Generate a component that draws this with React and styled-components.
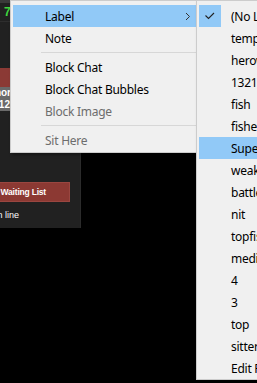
import React from "react";
import styled, { createGlobalStyle } from "styled-components";

const Global = createGlobalStyle`
  html, body { margin: 0; padding: 0; background: #000; }
  body { overflow: hidden; }
`;

const Stage = styled.div`
  position: relative;
  width: 257px;
  height: 383px;
  overflow: hidden;
  background: #000;
  font-family: "Noto Sans", "DejaVu Sans", sans-serif;
`;

const Panel = styled.div`
  width: 80px;
  height: 228px;
  background: #212121;
  border-right: 1px solid #2b2b2b;
  display: flex;
  flex-direction: column;
  overflow: hidden;
  font-family: "Liberation Sans", "DejaVu Sans", sans-serif;
`;

const TopStrip = styled.div`
  height: 3px;
  background: #3a3a3a;
`;

const SeatRow = styled.div`
  height: 18px;
  border-bottom: 1px solid #2e2e2e;
  display: flex;
  align-items: center;
  padding-left: 4px;
  color: #3fd63f;
  font-weight: bold;
  font-size: 12px;
`;

const Spacer = styled.div`
  height: ${(p) => p.$h}px;
  flex: none;
`;

const RedBar = styled.div`
  height: 19px;
  background: #8b3a35;
`;

const GreyBar = styled.div`
  height: 25px;
  background: #6a6a6a;
  color: #fff;
  font-weight: bold;
  font-size: 10px;
  line-height: 12px;
  display: flex;
  flex-direction: column;
  justify-content: center;
`;

/* a text fragment whose start is hidden past the panel's left edge:
   it ends at a given x and overflows to the left, where the panel clips it */
const EndAt = styled.div`
  flex: none;
  width: ${(p) => p.$end}px;
  display: flex;
  justify-content: flex-end;
  white-space: nowrap;
`;

const WaitButton = styled.div`
  width: 70px;
  height: 20px;
  box-sizing: border-box;
  background: #8c3933;
  border: 1px solid #9a4640;
  border-left: none;
  color: #fff;
  font-weight: bold;
  font-size: 8.5px;
  letter-spacing: -0.2px;
  display: flex;
  align-items: center;
`;

const LineText = styled.div`
  color: #fff;
  font-size: 9px;
  height: 26px;
  display: flex;
  align-items: center;
`;

const Menu = styled.div`
  position: absolute;
  top: ${(p) => p.$top}px;
  left: ${(p) => p.$left}px;
  width: ${(p) => p.$width}px;
  box-sizing: border-box;
  background: #f0f0f0;
  border: 1px solid #cccccc;
  padding: 4px 2px ${(p) => p.$pb}px 2px;
  box-shadow: 2px 2px 3px rgba(0, 0, 0, 0.35);
  font-family: "Noto Sans", "Open Sans", sans-serif;
  font-size: 12px;
  letter-spacing: -0.25px;
`;

const Item = styled.div`
  position: relative;
  height: 22px;
  display: flex;
  align-items: center;
  padding-left: 32px;
  background: ${(p) => (p.$hl ? "#91c9f7" : "transparent")};
  color: ${(p) => (p.$disabled ? "#6d6d6d" : "#000")};
  white-space: nowrap;
`;

const Separator = styled.div`
  height: 1px;
  background: #d7d7d7;
  margin: 3px 0 3px 28px;
`;

const Chevron = styled.svg`
  position: absolute;
  left: 172px;
  top: 7px;
`;

const CheckBox = styled.div`
  position: absolute;
  left: 0;
  top: 0;
  width: 22px;
  height: 22px;
  background: #91c9f7;
  display: flex;
`;

const mainItems = [
  { label: "Label", hl: true, sub: true },
  { label: "Note" },
  { sep: true },
  { label: "Block Chat" },
  { label: "Block Chat Bubbles" },
  { label: "Block Image", disabled: true },
  { sep: true },
  { label: "Sit Here", disabled: true },
];

const subItems = [
  "(No Label)",
  "temp",
  "herowannabe",
  "13212",
  "fish",
  "fisherman",
  "Super",
  "weak",
  "battler",
  "nit",
  "topfish",
  "medium",
  "4",
  "3",
  "top",
  "sitter",
  "Edit Presets",
];

export default function App() {
  return (
    <>
      <Global />
      <Stage>
        <Panel>
          <TopStrip />
          <SeatRow>7</SeatRow>
          <Spacer $h={46} />
          <RedBar />
          <GreyBar>
            <EndAt $end={11}>Donor</EndAt>
            <EndAt $end={10}>$12</EndAt>
          </GreyBar>
          <Spacer $h={71} />
          <WaitButton>
            <EndAt $end={46}>Join Waiting List</EndAt>
          </WaitButton>
          <LineText>
            <EndAt $end={19}>0 in line</EndAt>
          </LineText>
        </Panel>

        <Menu $top={0} $left={10} $width={205} $pb={1}>
          {mainItems.map((it, i) =>
            it.sep ? (
              <Separator key={i} />
            ) : (
              <Item key={i} $hl={it.hl} $disabled={it.disabled}>
                {it.label}
                {it.sub && (
                  <Chevron width="6" height="9" viewBox="0 0 6 9">
                    <path d="M1 1 L4.5 4.5 L1 8" fill="none" stroke="#333" strokeWidth="1" />
                  </Chevron>
                )}
              </Item>
            )
          )}
        </Menu>

        <Menu $top={0} $left={196} $width={130} $pb={0}>
          {subItems.map((s, i) => (
            <Item key={i} $hl={s === "Super"}>
              {i === 0 && (
                <CheckBox>
                  <svg width="22" height="22" viewBox="0 0 22 22">
                    <path d="M6.5 10.5 L9.5 13.5 L15 8" fill="none" stroke="#222" strokeWidth="1.1" />
                  </svg>
                </CheckBox>
              )}
              {s}
            </Item>
          ))}
        </Menu>
      </Stage>
    </>
  );
}
